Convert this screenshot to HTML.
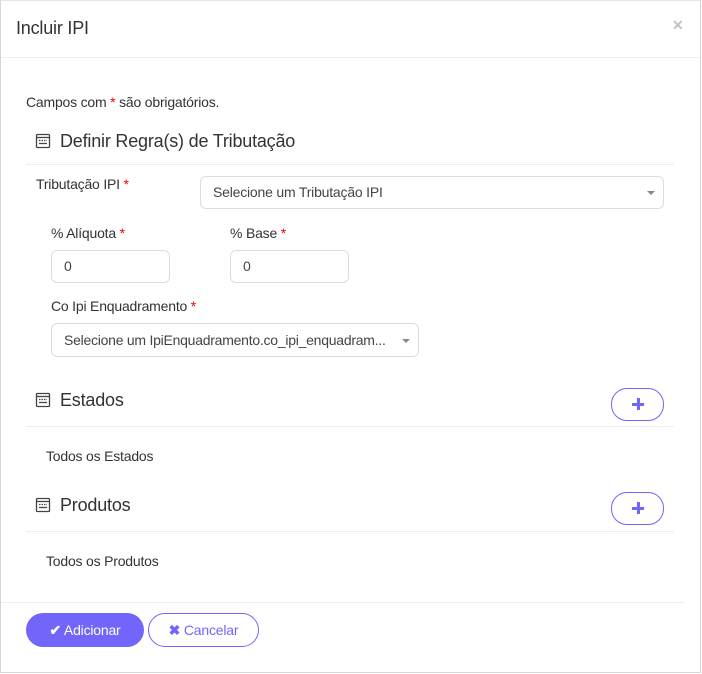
<!DOCTYPE html><html><head><meta charset="utf-8"><style>
body{margin:0;width:702px;height:674px;background:#fff;font-family:"Liberation Sans",sans-serif;color:#333;position:relative;overflow:hidden;letter-spacing:-0.2px}
.a{position:absolute}
.frame{left:0;top:0;width:699px;height:671px;border:1px solid #d6d6d6;border-top:1px solid #e5e5e5}
.hr{height:1px;background:#eee}
.t{font-size:14px;color:#333}
.h{font-size:18px;color:#333}
.r{color:#e00}
.inp{border:1px solid #ddd;border-radius:6px;box-sizing:border-box;font-size:14px;color:#444;padding-left:12px;line-height:30px;white-space:nowrap;overflow:hidden}
.car{position:absolute;right:8px;top:14px;width:0;height:0;border-left:4px solid transparent;border-right:4px solid transparent;border-top:4px solid #888}
.pb{border:1px solid #7166f9;border-radius:16px;box-sizing:border-box;width:53px;height:33px}
.pb:before{content:"";position:absolute;left:20px;top:13.5px;width:12px;height:3px;background:#7166f9}
.pb:after{content:"";position:absolute;left:24.5px;top:9px;width:3px;height:12px;background:#7166f9}
</style></head><body>
<div class="a frame"></div>
<div class="a h" style="left:16px;top:18px">Incluir IPI</div>
<div class="a" style="left:672px;top:17px;color:#c4c4c4;font-size:14px;font-weight:bold">✕</div>
<div class="a hr" style="left:1px;top:57px;width:699px"></div>
<div class="a t" style="left:26px;top:94px">Campos com <span class="r">*</span> são obrigatórios.</div>

<svg class="a" style="left:35px;top:133px" width="16" height="16" viewBox="0 0 16 16" fill="none" stroke="#444" stroke-width="1.3"><rect x="1.5" y="1.5" width="13" height="13" rx="1"/><line x1="1.5" y1="4.5" x2="14.5" y2="4.5"/><line x1="4" y1="7.5" x2="12" y2="7.5" stroke-dasharray="1.5 1"/><line x1="4" y1="10.5" x2="12" y2="10.5"/></svg>
<div class="a h" style="left:60px;top:131px">Definir Regra(s) de Tributação</div>
<div class="a hr" style="left:26px;top:164px;width:648px"></div>
<div class="a t" style="left:36px;top:176px">Tributação IPI <span class="r">*</span></div>
<div class="a inp" style="left:200px;top:176px;width:464px;height:33px">Selecione um Tributação IPI<div class="car"></div></div>
<div class="a t" style="left:51px;top:225px">% Alíquota <span class="r">*</span></div>
<div class="a t" style="left:230px;top:225px">% Base <span class="r">*</span></div>
<div class="a inp" style="left:51px;top:250px;width:119px;height:33px">0</div>
<div class="a inp" style="left:230px;top:250px;width:119px;height:33px">0</div>
<div class="a t" style="left:51px;top:298px">Co Ipi Enquadramento <span class="r">*</span></div>
<div class="a inp" style="left:51px;top:323px;width:368px;height:34px;line-height:32px;font-size:14px;letter-spacing:-0.25px">Selecione um IpiEnquadramento.co_ipi_enquadram...<div class="car" style="top:15px"></div></div>

<svg class="a" style="left:35px;top:392px" width="16" height="16" viewBox="0 0 16 16" fill="none" stroke="#444" stroke-width="1.3"><rect x="1.5" y="1.5" width="13" height="13" rx="1"/><line x1="1.5" y1="4.5" x2="14.5" y2="4.5"/><line x1="4" y1="7.5" x2="12" y2="7.5" stroke-dasharray="1.5 1"/><line x1="4" y1="10.5" x2="12" y2="10.5"/></svg>
<div class="a h" style="left:60px;top:390px">Estados</div>
<div class="a pb" style="left:611px;top:388px"></div>
<div class="a hr" style="left:26px;top:426px;width:648px"></div>
<div class="a t" style="left:46px;top:448px">Todos os Estados</div>

<svg class="a" style="left:35px;top:497px" width="16" height="16" viewBox="0 0 16 16" fill="none" stroke="#444" stroke-width="1.3"><rect x="1.5" y="1.5" width="13" height="13" rx="1"/><line x1="1.5" y1="4.5" x2="14.5" y2="4.5"/><line x1="4" y1="7.5" x2="12" y2="7.5" stroke-dasharray="1.5 1"/><line x1="4" y1="10.5" x2="12" y2="10.5"/></svg>
<div class="a h" style="left:60px;top:495px">Produtos</div>
<div class="a pb" style="left:611px;top:492px"></div>
<div class="a hr" style="left:26px;top:531px;width:648px"></div>
<div class="a t" style="left:46px;top:553px">Todos os Produtos</div>

<div class="a hr" style="left:1px;top:602px;width:683px"></div>
<div class="a" style="left:26px;top:613px;width:118px;height:34px;border-radius:17px;background:#7166f9;color:#fff;font-size:14px;line-height:34px;text-align:center"><b>✔</b> Adicionar</div>
<div class="a" style="left:148px;top:613px;width:111px;height:34px;border-radius:17px;border:1px solid #7166f9;box-sizing:border-box;color:#7166f9;font-size:14px;line-height:32px;text-align:center"><b>✖</b> Cancelar</div>
</body></html>
